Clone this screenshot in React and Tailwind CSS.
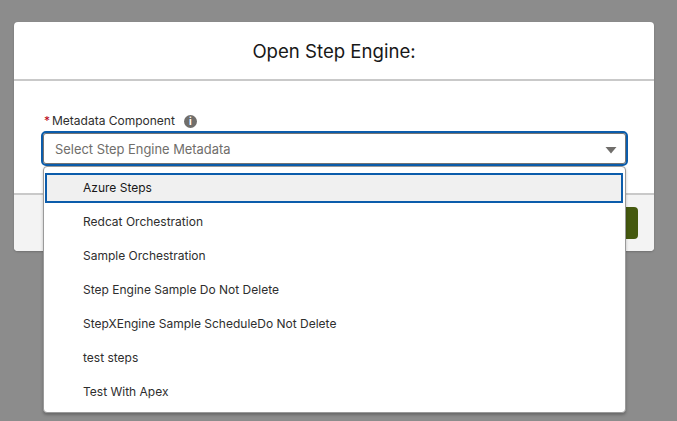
import React from "react";

const items = [
  "Azure Steps",
  "Redcat Orchestration",
  "Sample Orchestration",
  "Step Engine Sample Do Not Delete",
  "StepXEngine Sample ScheduleDo Not Delete",
  "test steps",
  "Test With Apex",
];

export default function App() {
  return (
    <div className="h-[421px] w-[677px] overflow-hidden bg-[#8c8c8c] pl-[14px] pt-[22px] font-['Inter',sans-serif]">
      <div className="relative w-[640px] rounded-[4px] bg-white shadow-[0_1px_2px_rgba(0,0,0,0.2)]">
        <header className="flex h-[59px] items-center justify-center rounded-t-[4px] border-b-2 border-[#c9c9c9]">
          <h2 className="text-[18.6px] leading-6 text-[#181818]">Open Step Engine:</h2>
        </header>
        <div className="h-[112px] px-[27px] pt-[31px]">
          <div className="flex h-[18px] items-center text-[12px] leading-[18px] text-[#2e2e2e]">
            <span className="ml-[3px] mr-[2px] text-[#ba0517]">*</span>
            <span>Metadata Component</span>
            <span className="ml-[9px] flex h-[13px] w-[13px] items-center justify-center rounded-full bg-[#706e6b] text-[10px] font-bold leading-none text-white">i</span>
          </div>
          <div className="relative mt-[1px] flex h-[35px] w-[587px] items-center justify-between rounded-[5px] border-2 border-[#0b5cab] bg-white pl-[12px] pr-[9px] pt-[2px] text-[12.9px] text-[#706e6b] shadow-[inset_0_0_0_1px_#747474]">
            <span>Select Step Engine Metadata</span>
            <svg width="12" height="8" viewBox="0 0 12 8">
              <path d="M0.5 1 L11.5 1 L6 7.5 Z" fill="#706e6b" />
            </svg>
          </div>
        </div>
        <footer className="flex h-[58px] items-center justify-end rounded-b-[4px] border-t-2 border-[#c9c9c9] bg-[#f3f3f3] pr-[16px]">
          <div className="h-[32px] w-[60px] rounded-[4px] bg-[#45590f]" />
        </footer>
        <ul className="absolute left-[29px] top-[144px] h-[247px] w-[583px] rounded-[4px] border border-[#9a9a9a] bg-white pl-[1px] pr-[2px] pt-[6px] text-[12px] text-[#2e2e2e] shadow-[0_2px_3px_rgba(0,0,0,0.25)]">
          {items.map((t, i) => (
            <li
              key={t}
              className={
                i === 0
                  ? "flex h-[30px] items-center border-2 border-[#0b5cab] bg-[#f0f0f0] pl-[36px] text-[#181818]"
                  : "mt-[4px] flex h-[30px] items-center pl-[38px]"
              }
            >
              {t}
            </li>
          ))}
        </ul>
      </div>
    </div>
  );
}
